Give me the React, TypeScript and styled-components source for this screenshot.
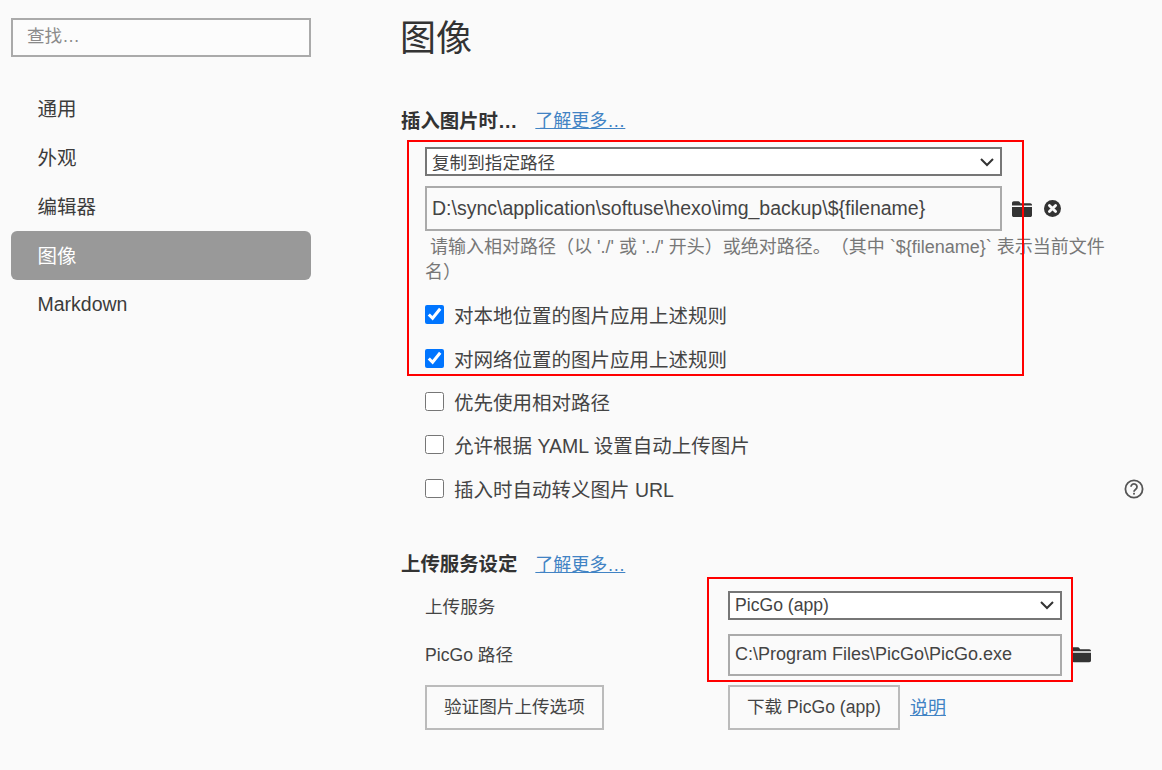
import React from "react";
import styled, { createGlobalStyle } from "styled-components";

const Global = createGlobalStyle`
  html, body { margin: 0; padding: 0; height: 100%; overflow: hidden; background: #fafafa; }
  * { box-sizing: border-box; }
  body { font-family: "Liberation Sans", "Noto Sans CJK SC", sans-serif; color: #444; text-spacing-trim: space-all; }
`;

const Page = styled.div`
  position: relative;
  width: 1162px;
  height: 770px;
  display: flex;
  background: #fafafa;
  overflow: hidden;
`;

const Sidebar = styled.nav`
  width: 401px;
  flex: none;
  padding: 18px 90px 0 11px;
  display: flex;
  flex-direction: column;
`;

const Search = styled.input`
  width: 300px;
  height: 39px;
  border: 2px solid #aaa;
  background: #fcfcfc;
  padding: 0 14px 2px;
  font: 17.6px "Liberation Sans", "Noto Sans CJK SC", sans-serif;
  margin-bottom: 27px;
  outline: none;
  &::placeholder { color: #8a8a8a; opacity: 1; }
`;

const NavItem = styled.div<{ $active?: boolean; $raise?: boolean }>`
  width: 300px;
  height: 49px;
  padding: 0 0 ${(p) => (p.$raise ? 3 : 0)}px 26.5px;
  display: flex;
  align-items: center;
  font-size: 19.5px;
  border-radius: 6px;
  color: ${(p) => (p.$active ? "#fff" : "#3c3c3c")};
  background: ${(p) => (p.$active ? "#999" : "transparent")};
`;

const Main = styled.main`
  flex: 1;
  padding: 0 18px 0 0;
  min-width: 0;
`;

const Title = styled.h1`
  margin: 0 0 0 -1px;
  height: 76px;
  padding-top: 14px;
  font-size: 36px;
  line-height: 50px;
  font-weight: 400;
  color: #333;
`;

const SectionHead = styled.div`
  display: flex;
  align-items: center;
  gap: 18px;
  height: 26px;
`;

const FirstHead = styled(SectionHead)`
  margin-top: 31px;
  padding-bottom: 2px;
`;

const SecondHead = styled(SectionHead)`
  margin-top: 41px;
  padding-bottom: 2px;
`;

const HeadText = styled.strong`
  font-size: 19.4px;
  font-weight: 700;
  color: #333;
`;

const TextLink = styled.a`
  color: #4183c4;
  text-decoration: underline;
  font-size: 18px;
  cursor: pointer;
`;

const NoteLink = styled(TextLink)`
  margin-left: 10px;
  padding-bottom: 2px;
`;

const Indent = styled.div`
  margin-left: 24px;
`;

const SelectBox = styled.div<{ $w: number }>`
  width: ${(p) => p.$w}px;
  height: 29px;
  border: 2px solid #767676;
  background: #fff;
  display: flex;
  align-items: center;
  justify-content: space-between;
  padding: 0 5px;
  font-size: 17.6px;
  color: #444;
`;

const TopSelect = styled(SelectBox)`
  margin-top: 14px;
`;

const Chevron = () => (
  <svg width="16" height="16" viewBox="0 0 16 16" aria-hidden="true">
    <path d="M2 5l6 6 6-6" fill="none" stroke="#333" strokeWidth="2" />
  </svg>
);

const PathInput = styled.input<{ $w: number; $h: number; $size: number }>`
  width: ${(p) => p.$w}px;
  height: ${(p) => p.$h}px;
  border: 2px solid #aaa;
  background: #fafafa;
  padding: 0 5px;
  font: ${(p) => p.$size}px "Liberation Sans", "Noto Sans CJK SC", sans-serif;
  color: #444;
  outline: none;
`;

const PathRow = styled.div`
  display: flex;
  align-items: center;
  margin-top: 10px;
`;

const IconGap = styled.span<{ $l: number }>`
  display: inline-flex;
  margin-left: ${(p) => p.$l}px;
  color: #333;
`;

const Help = styled.p`
  margin: 4px 0 0;
  width: 690px;
  font-size: 18px;
  line-height: 25px;
  color: #777;
  text-indent: 5px;
`;

const Checks = styled.div`
  margin-top: 8px;
  display: flex;
  flex-direction: column;
`;

const CheckRow = styled.label`
  display: flex;
  align-items: center;
  height: 43.4px;
  font-size: 19.5px;
  color: #444;
`;

const Check = styled.input`
  width: 19px;
  height: 19px;
  margin: 0 10px 0 0;
  accent-color: #0075ff;
`;

const CheckList = styled.div`
  position: relative;
`;

const HelpIcon = styled.span`
  position: absolute;
  right: 0;
  bottom: 11px;
  display: inline-flex;
  color: #555;
`;

const FormGrid = styled.div`
  display: grid;
  grid-template-columns: 303px 1fr;
  row-gap: 14px;
  margin-top: 14px;
  font-size: 17.6px;
`;

const Cell = styled.div<{ $h: number }>`
  display: flex;
  align-items: center;
  min-height: ${(p) => p.$h}px;
`;

const LabelCell = styled(Cell)`
  padding-bottom: 2px;
`;

const ButtonCell = styled(Cell)`
  margin-top: -5px;
`;

const Btn = styled.button`
  height: 45px;
  padding: 0 17px 3px;
  border: 2px solid #bbb;
  background: #fafafa;
  color: #444;
  font: 17.6px "Liberation Sans", "Noto Sans CJK SC", sans-serif;
`;

const RedFrame = styled.div<{ $x: number; $y: number; $w: number; $h: number }>`
  position: absolute;
  left: ${(p) => p.$x}px;
  top: ${(p) => p.$y}px;
  width: ${(p) => p.$w}px;
  height: ${(p) => p.$h}px;
  border: 2px solid #f00;
  pointer-events: none;
`;

const Folder = ({ size = 20 }: { size?: number }) => (
  <svg width={size} height={size * 0.8} viewBox="0 0 20 16" aria-hidden="true">
    <path d="M0 2.2C0 1 .8.3 1.8.3h4.4c.8 0 1.3.4 1.7 1l.6 1h9.7c1 0 1.8.8 1.8 1.7v.6H0z" fill="#333" />
    <path d="M0 6h20v8.2c0 1-.8 1.8-1.8 1.8H1.8C.8 16 0 15.2 0 14.2z" fill="#333" />
  </svg>
);

const CloseCircle = () => (
  <svg width="17" height="17" viewBox="0 0 17 17" aria-hidden="true">
    <circle cx="8.5" cy="8.5" r="8.5" fill="#333" />
    <path d="M5.4 5.4l6.2 6.2M11.6 5.4l-6.2 6.2" stroke="#fafafa" strokeWidth="2.8" strokeLinecap="round" />
  </svg>
);

const Question = () => (
  <svg width="20" height="20" viewBox="0 0 20 20" aria-hidden="true">
    <circle cx="10" cy="10" r="8.6" fill="none" stroke="#555" strokeWidth="1.8" />
    <path d="M7 7.8a3 3 0 1 1 4.7 2.5c-1 .7-1.7 1.1-1.7 2.4" fill="none" stroke="#555" strokeWidth="1.8" />
    <rect x="9.1" y="13.8" width="1.8" height="1.8" fill="#555" />
  </svg>
);

const navItems = ["通用", "外观", "编辑器", "图像", "Markdown"];
const checks = [
  { label: "对本地位置的图片应用上述规则", on: true },
  { label: "对网络位置的图片应用上述规则", on: true },
  { label: "优先使用相对路径", on: false },
  { label: "允许根据 YAML 设置自动上传图片", on: false },
  { label: "插入时自动转义图片 URL", on: false },
];
const helpText = "请输入相对路径（以 './' 或 '../' 开头）或绝对路径。（其中 `${filename}` 表示当前文件名）";

export default function App() {
  return (
    <Page lang="zh-CN">
      <Global />
      <Sidebar>
        <Search placeholder="查找…" />
        {navItems.map((n) => (
          <NavItem key={n} $active={n === "图像"} $raise={n !== "Markdown"}>{n}</NavItem>
        ))}
      </Sidebar>
      <Main>
        <Title>图像</Title>
        <FirstHead>
          <HeadText>插入图片时…</HeadText>
          <TextLink>了解更多…</TextLink>
        </FirstHead>
        <Indent>
          <TopSelect $w={577}>
            <span>复制到指定路径</span>
            <Chevron />
          </TopSelect>
          <PathRow>
            <PathInput $w={577} $h={45} $size={19.5} readOnly value="D:\sync\application\softuse\hexo\img_backup\${filename}" />
            <IconGap $l={10}><Folder /></IconGap>
            <IconGap $l={12}><CloseCircle /></IconGap>
          </PathRow>
          <Help>{helpText}</Help>
          <CheckList>
            <Checks>
              {checks.map((c) => (
                <CheckRow key={c.label}>
                  <Check type="checkbox" readOnly checked={c.on} />
                  {c.label}
                </CheckRow>
              ))}
            </Checks>
            <HelpIcon><Question /></HelpIcon>
          </CheckList>
        </Indent>
        <SecondHead>
          <HeadText>上传服务设定</HeadText>
          <TextLink>了解更多…</TextLink>
        </SecondHead>
        <Indent>
          <FormGrid>
            <Cell $h={29}>上传服务</Cell>
            <Cell $h={29}>
              <SelectBox $w={334}>
                <span>PicGo (app)</span>
                <Chevron />
              </SelectBox>
            </Cell>
            <LabelCell $h={42}>PicGo 路径</LabelCell>
            <Cell $h={42}>
              <PathInput $w={334} $h={42} $size={18} readOnly value="C:\Program Files\PicGo\PicGo.exe" />
              <IconGap $l={10}><Folder size={19} /></IconGap>
            </Cell>
            <ButtonCell $h={45}><Btn>验证图片上传选项</Btn></ButtonCell>
            <ButtonCell $h={45}>
              <Btn>下载 PicGo (app)</Btn>
              <NoteLink>说明</NoteLink>
            </ButtonCell>
          </FormGrid>
        </Indent>
      </Main>
      <RedFrame $x={407} $y={140} $w={617} $h={236} />
      <RedFrame $x={707} $y={577} $w={366} $h={105} />
    </Page>
  );
}
